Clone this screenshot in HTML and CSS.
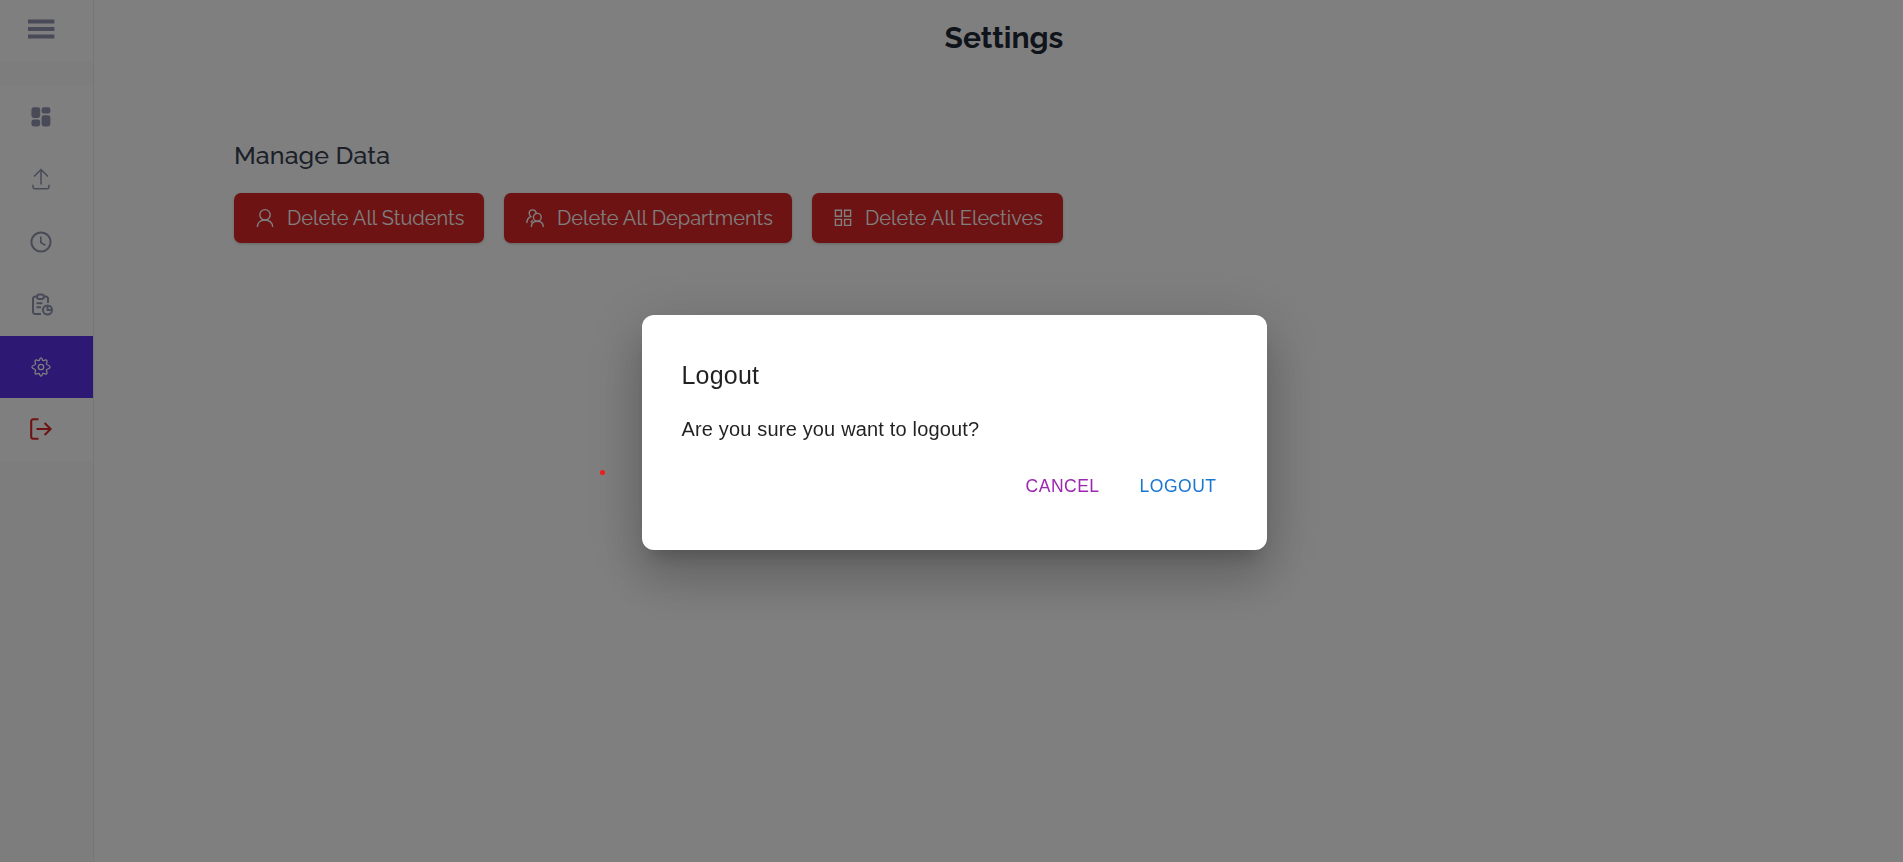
FILE: index.html
```html
<!DOCTYPE html>
<html lang="en">
<head>
<meta charset="utf-8">
<title>Settings</title>
<link rel="stylesheet" href="styles.css">
</head>
<body>
<div class="app">
  <aside class="sidebar">
    <div class="menu-toggle">
      <svg class="burger" width="27" height="20" viewBox="0 0 27 20"><path d="M0 2.4h26.4M0 10h26.4M0 17.6h26.4" stroke="currentColor" stroke-width="4"/></svg>
    </div>
    <nav class="nav">
      <a class="nav-item"><svg width="20" height="20" viewBox="0 0 20 20" fill="currentColor"><rect x=".4" y=".3" width="8.8" height="10.7" rx="2.4"/><rect x="10.600" y=".3" width="8.800" height="6.300" rx="2.400"/><rect x=".4" y="12.600" width="8.800" height="6.800" rx="2.400"/><rect x="10.600" y="8.300" width="8.800" height="11.100" rx="2.400"/></svg></a>
      <a class="nav-item"><svg width="20" height="22" viewBox="0 0 20 22" fill="none" stroke="currentColor" stroke-width="1.500"><path d="M10 16.500V1.500M3 8.500l7-7 7 7M2 16.800v2.200a1.700 1.700 0 0 0 1.700 1.700h12.600a1.700 1.700 0 0 0 1.700-1.700v-2.200"/></svg></a>
      <a class="nav-item"><svg width="22" height="22" viewBox="0 0 22 22" fill="none" stroke="currentColor"><circle cx="11" cy="11" r="9.600" stroke-width="2"/><path d="M10.800 5.500v6l4.600 2.900" stroke-width="1.600"/></svg></a>
      <a class="nav-item reports"><svg width="22" height="23" viewBox="0 0 22 23" fill="none" stroke="currentColor" stroke-width="2"><path d="M10 21H4.200A2.200 2.200 0 0 1 2 18.800V5.800a2.200 2.200 0 0 1 2.200-2.200H6M12.500 3.600h2.300A2.200 2.200 0 0 1 17 5.800v4.200"/><rect x="6.100" y="1.500" width="6.700" height="4.400" rx="2"/><path d="M5.500 10.200h6M5.500 14.300h4.500"/><circle cx="16.500" cy="17" r="4.500"/><path d="M16.500 12.500V17H21"/></svg></a>
      <a class="nav-item active"><svg width="20" height="20" viewBox="0 0 20 20" fill="none" stroke="currentColor" stroke-width="1.300" stroke-linejoin="round"><path d="M8.200 3.500C8.900 2.900 8.600.9 10 .9s1.100 2 1.800 2.600c.9.500 2.800-1.300 3.900-.2s-.7 2.900-.2 3.900c.5.900 3.600.9 3.600 2.800s-3.100 1.900-3.600 2.800c-.5 1 1.300 2.800.2 3.900s-3-.7-3.900-.2c-.7.600-.4 2.600-1.800 2.600s-1.100-2-1.800-2.600c-.9-.5-2.800 1.300-3.900.2s.7-2.900.2-3.900C4 11.900.9 11.900.9 10S4 8.100 4.500 7.200c.5-1-1.300-2.800-.2-3.900s3 .7 3.900.2z"/><circle cx="10" cy="10" r="2.700"/></svg></a>
      <a class="nav-item exit"><svg width="22" height="22" viewBox="0 0 22 22" fill="none" stroke="currentColor" stroke-width="2.100"><path d="M8.500 1.300H3.200a2 2 0 0 0-2 2v15.400a2 2 0 0 0 2 2h5.300M6.500 11h14M14.600 5l6 6-6 6"/></svg></a>
    </nav>
  </aside>
  <main class="main">
    <h1 class="title"><span>Settings</span></h1>
    <section class="manage">
      <h2 class="subtitle">Manage Data</h2>
      <div class="actions">
        <button class="danger students"><svg width="18" height="20" viewBox="0 0 18 20" fill="none" stroke="currentColor" stroke-width="1.400"><circle cx="9" cy="6.800" r="5.200"/><path d="M1.400 19c0-4.300 3.200-7 7.600-7s7.600 2.700 7.600 7"/></svg><span>Delete All Students</span></button>
        <button class="danger departments"><svg width="18" height="20" viewBox="0 0 18 20" fill="none" stroke="currentColor" stroke-width="1.400"><circle cx="11.300" cy="9.300" r="3.900"/><path d="M5.300 19c0-3.700 2.300-5.800 6-5.800s6 2.100 6 5.800M10.200 5.200C9.900 3 8.500 1.900 6.700 1.900c-2.200 0-3.500 1.400-3.500 3.400 0 1.400.5 2.500 1.600 3.200C2.600 9.500.9 11.800.9 15M6.600 12.300l-1.800 2.200"/></svg><span>Delete All Departments</span></button>
        <button class="danger electives"><svg width="18" height="18" viewBox="0 0 18 18" fill="none" stroke="currentColor" stroke-width="1.400"><path d="M1.400 1.200h6v6h-6zM10.600 1.200h6v6h-6zM1.400 10.400h6v6h-6zM10.600 10.400h6v6h-6z"/></svg><span>Delete All Electives</span></button>
      </div>
    </section>
  </main>
</div>
<div class="backdrop">
  <div class="dialog" role="dialog">
    <h3 class="dialog-title">Logout</h3>
    <p class="dialog-text">Are you sure you want to logout?</p>
    <div class="dialog-actions">
      <button class="text-btn cancel">CANCEL</button>
      <button class="text-btn confirm">LOGOUT</button>
    </div>
  </div>
  <i class="marker"></i>
</div>
</body>
</html>
```
FILE: styles.css
```css
* { box-sizing: border-box; }
body { margin: 0; height: 862px; overflow: hidden; background: #fff; font-family: Raleway, Lato, sans-serif; }
h1, h2, h3, p { margin: 0; }
button { border: 0; font: inherit; }
svg { display: block; flex: none; }
.app { display: flex; height: 862px; }
.sidebar { width: 94px; background: #fafafa; border-right: 1px solid #ececee; color: #9095b0; }
.menu-toggle { height: 61px; padding: 19px 0 0 28px; background: #fff; }
.nav { margin-top: 25px; background: #fff; }
.nav-item { height: 62.500px; padding: 0 12px 1px 0; display: flex; align-items: center; justify-content: center; }
.reports { padding-right: 10px; padding-bottom: 0; }
.active { height: 62px; background: #5a30e8; color: #fff; }
.exit { color: #dc2626; padding-bottom: 0; }
.main { flex: 1; }
.title { padding-top: 19px; padding-left: 11px; text-align: center; font-size: 30px; line-height: 38px; font-weight: 700; color: #1f2937; }
.manage { padding: 80px 0 0 140px; }
.subtitle { font-size: 25px; line-height: 36px; font-weight: 500; letter-spacing: .1px; color: #374151; }
.actions { display: flex; gap: 20px; margin-top: 20px; }
.danger { height: 50px; padding: 0 20px 1px 22px; display: flex; align-items: center; gap: 13px; border-radius: 7px; background: #dc2626; color: #fff; font-size: 20px; white-space: nowrap; box-shadow: 0 1px 3px rgba(0,0,0,.2); }
.students { width: 250px; }
.departments { width: 288px; }
.electives { width: 251px; }
.backdrop { position: fixed; inset: 0; background: rgba(0,0,0,.5); display: flex; align-items: flex-start; justify-content: center; padding-top: 315px; padding-left: 5px; font-family: "Liberation Sans", Arial, sans-serif; }
.dialog { width: 625px; height: 235px; padding: 40px; border-radius: 12px; background: #fff; color: rgba(0,0,0,.87); box-shadow: 0 14px 19px -9px rgba(0,0,0,.2), 0 30px 48px 4px rgba(0,0,0,.14), 0 11px 58px 10px rgba(0,0,0,.12); }
.dialog-title { font-size: 25px; line-height: 40px; font-weight: 400; letter-spacing: .19px; }
.dialog-text { margin-top: 19px; font-size: 20px; line-height: 30px; letter-spacing: .17px; }
.dialog-actions { display: flex; justify-content: flex-end; gap: 20px; margin-top: 19px; }
.text-btn { padding: 8px 10px; background: none; font-size: 17.500px; line-height: 30px; letter-spacing: .5px; }
.cancel { color: #9c27b0; }
.confirm { color: #1976d2; }
.marker { position: absolute; left: 600px; top: 470px; width: 5px; height: 5px; border-radius: 50%; background: #ee1c1c; }
```
